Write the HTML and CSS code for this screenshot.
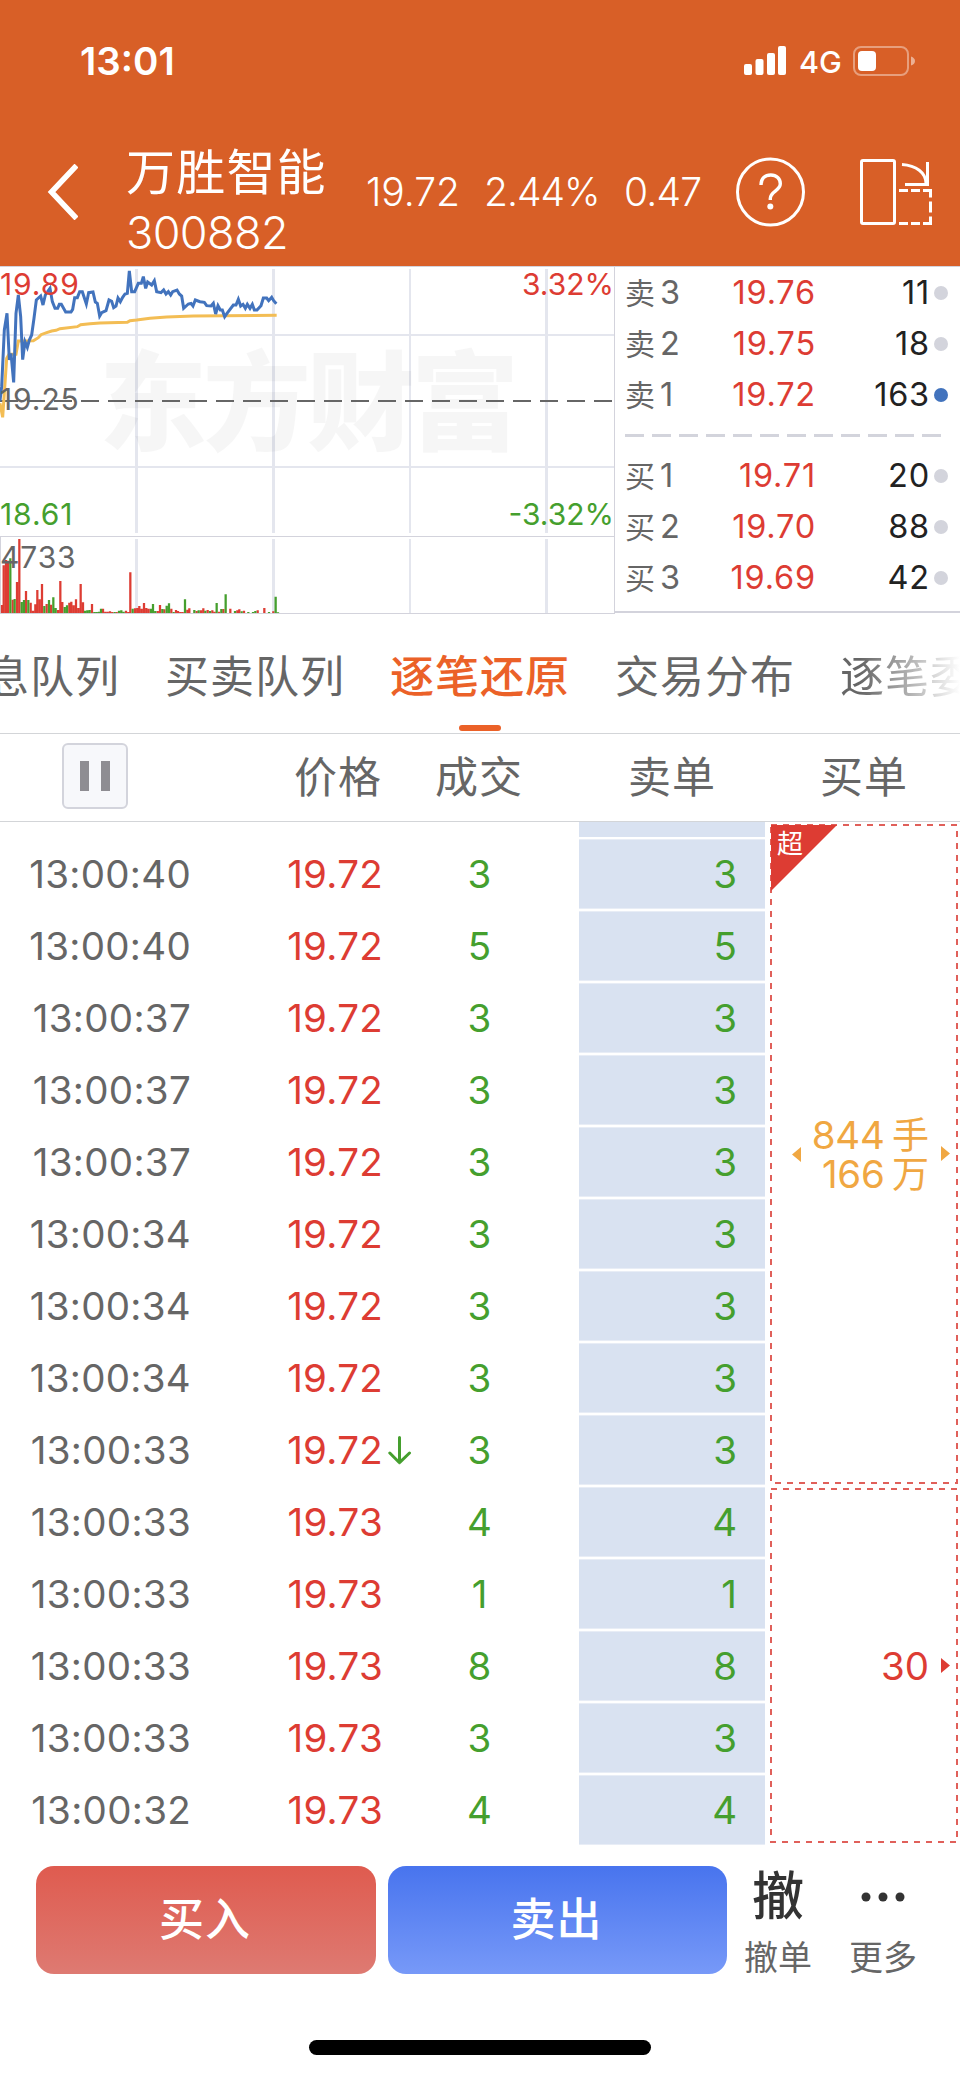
FILE: index.html
```html
<!DOCTYPE html>
<html lang="zh-CN">

<head>
    <meta charset="UTF-8">
    <meta name="viewport" content="width=device-width, initial-scale=1.0">
    <title>万胜智能 300882</title>
    <link rel="stylesheet" href="styles.css">
</head>

<body>
    <!-- Header -->
    <header class="header">
        <div class="status">
            <span class="clock">13:01</span>
            <svg class="signal" width="42" height="29" viewBox="0 0 42 29" fill="#fff">
                <rect x="0" y="18" width="8" height="11" rx="2" />
                <rect x="11.5" y="13" width="8" height="16" rx="2" />
                <rect x="23" y="7" width="8" height="22" rx="2" />
                <rect x="34" y="0" width="8" height="29" rx="2" />
            </svg>
            <span class="network">4G</span>
            <svg class="battery" width="63" height="30" viewBox="0 0 63 30">
                <rect x="1" y="1" width="54" height="28" rx="7" fill="none" stroke="#fff" stroke-opacity=".4" stroke-width="2" />
                <rect x="5" y="5" width="18" height="20" rx="4" fill="#fff" />
                <path d="M58 10.5q4 1.500 4 4.500t-4 4.500z" fill="#fff" fill-opacity=".5" />
            </svg>
        </div>
        <div class="navbar">
            <svg class="back" width="31" height="56" viewBox="0 0 31 56" fill="none" stroke="#fff" stroke-width="5.500">
                <path d="M29.500 1.500L4.500 28l25 26.500" />
            </svg>
            <div class="stock">
                <div class="stock-name">万胜智能</div>
                <div class="stock-code">300882</div>
            </div>
            <div class="quote">
                <span class="quote-price">19.72</span>
                <span class="quote-percent">2.44%</span>
                <span class="quote-change">0.47</span>
            </div>
            <svg class="help" width="70" height="70" viewBox="0 0 70 70" fill="none" stroke="#fff">
                <circle cx="34.500" cy="35" r="33" stroke-width="3" />
                <path d="M25 28c0-6.500 4-10 9.800-10s9.500 3.800 9.500 8.800c0 7.200-10 7.400-10 14.700V43" stroke-width="3.400" />
                <circle cx="34.300" cy="49.500" r="3" fill="#fff" stroke="none" />
            </svg>
            <svg class="rotate" width="72" height="66" viewBox="0 0 72 66" fill="none" stroke="#fff" stroke-width="3">
                <rect x="1.500" y="1.500" width="33" height="63" rx="1.500" />
                <path d="M42 5.500c14 1 24 8 24 19M67.500 3v22.500H45" />
                <path d="M39 31.500h9m3 0h9m3 0h7.500v7m0 4v11m0 4v7H63m-3 0h-9m-3 0h-9" />
            </svg>
        </div>
    </header>

    <!-- Chart and order book -->
    <section class="market">
        <svg class="chart" width="615" height="348" viewBox="0 0 615 348">
            <g fill="#e4e6ee">
                <rect x="135" y="3" width="3" height="264" />
                <rect x="272" y="3" width="3" height="264" />
                <rect x="409" y="3" width="2" height="264" />
                <rect x="545" y="3" width="3" height="264" />
                <rect x="135" y="273" width="3" height="74" />
                <rect x="272" y="273" width="3" height="74" />
                <rect x="409" y="273" width="2" height="74" />
                <rect x="545" y="273" width="3" height="74" />
                <rect x="0" y="68" width="614" height="2" />
                <rect x="0" y="200" width="614" height="2" />
            </g>
            <text class="watermark" x="99" y="176">东方财富</text>
            <g fill="#d3d3dc">
                <rect x="0" y="0" width="615" height="1" />
                <rect x="0" y="270" width="615" height="1" />
                <rect x="0" y="347" width="615" height="1" />
                <rect x="614" y="0" width="1" height="348" />
                <rect x="0" y="270" width="1" height="78" />
            </g>
            <path d="M0 135H612" stroke="#666" stroke-width="2" stroke-dasharray="18 9" />

            <g transform="translate(0 -6) scale(.33333)" fill="none">
                <!-- volume -->
                <path stroke="#dd3c33" stroke-width="6.800" d="M6 1059V1035M11 1059V916M18 1059V900M24 1059V902M38 1059V1019M51 1059V966M58 1059V837M78 1059V993M92 1059V1028M99 1059V1052M106 1059V1033M112 1059V990M119 1059V1018M126 1059V972M140 1059V1032M153 1059V1034M174 1059V1050M181 1059V963M187 1059V1026M208 1059V1028M214 1059V1025M221 1059V1036M228 1059V1018M235 1059V1044M242 1059V972M249 1059V1027M276 1059V1032M309 1059V1046M316 1059V1055M323 1059V1055M330 1059V1054M337 1059V1056M350 1059V1056M378 1059V1052M385 1059V1056M391 1059V937M405 1059V1045M412 1059V1044M418 1059V1038M425 1059V1046M432 1059V1029M439 1059V1044M446 1059V1046M473 1059V1053M480 1059V1035M493 1059V1048M514 1059V1046M528 1059V1050M534 1059V1053M541 1059V1056M548 1059V1056M562 1059V1049M568 1059V1045M590 1059V1053M603 1059V1051M610 1059V1045M623 1059V1050M637 1059V1051M644 1059V1055M657 1059V1055M670 1059V1047M691 1059V1046M712 1059V1051M718 1059V1048M732 1059V1052M773 1059V1051M793 1059V1044M820 1059V1054" />
                <path stroke="#459f2e" stroke-width="6.800" d="M31 1059V895M44 1059V1017M65 1059V1026M72 1059V1020M85 1059V1020M133 1059V1038M147 1059V1020M160 1059V1012M167 1059V1044M194 1059V1041M201 1059V1036M255 1059V1052M262 1059V1051M269 1059V1050M283 1059V1056M290 1059V1056M297 1059V1055M303 1059V1046M344 1059V1056M357 1059V1052M364 1059V1051M371 1059V1055M398 1059V1046M453 1059V1046M459 1059V1032M466 1059V1053M487 1059V1047M500 1059V1037M507 1059V1030M521 1059V1056M555 1059V1018M583 1059V1050M596 1059V1051M616 1059V1052M630 1059V1053M650 1059V1029M664 1059V1047M677 1059V1003M705 1059V1053M725 1059V1054M745 1059V1056M759 1059V1056M766 1059V1053M807 1059V1056M827 1059V1010M834 1059V1057" />
                <!-- average and price -->
                <polyline stroke="#f3bd54" stroke-width="9" points="0,430 8,472 15,370 20,295 27,283 48,283 55,243 100,242 115,233 123,224 140,218 155,213 168,211 180,206 232,200 242,194 270,191 300,189 382,187 390,182 410,180 450,175 500,171 580,168 830,166" />
                <polyline stroke="#4273bd" stroke-width="9" points="0,422 5,380 13,210 21,160 28,300 33,280 41,367 48,160 55,105 62,170 68,299 75,245 82,262 88,240 95,225 102,175 109,120 122,108 129,135 136,105 143,95 150,85 157,125 165,145 173,145 178,133 184,133 197,156 213,156 218,148 224,113 232,113 239,95 247,95 259,132 266,98 279,96 286,126 292,130 299,168 305,158 318,152 327,120 335,124 341,143 348,138 354,114 361,125 368,112 375,102 382,100 388,33 395,95 404,95 415,70 424,70 430,50 437,85 443,66 455,75 463,62 470,95 483,98 491,90 498,102 505,95 512,105 518,95 531,90 538,102 545,108 551,145 565,132 573,130 579,138 586,120 600,125 613,127 620,137 633,138 640,130 647,162 654,137 661,150 667,150 674,170 681,160 700,135 708,135 715,118 722,138 729,133 736,145 742,133 750,145 757,133 763,150 771,150 783,137 790,114 800,114 806,122 815,112 821,122 829,131" />
            </g>

            <g class="axis">
                <text class="up" x="0" y="29">19.89</text>
                <text class="flat" x="0" y="144">19.25</text>
                <text class="down" x="0" y="259">18.61</text>
                <text class="flat" x="0" y="302">4733</text>
                <text class="up percent" x="614" y="29" text-anchor="end">3.32%</text>
                <text class="down percent" x="614" y="259" text-anchor="end">-3.32%</text>
            </g>
        </svg>

        <div class="book">
            <div class="level"><span class="side">卖<b>3</b></span><span class="price">19.76</span><span class="amount">11</span><i class="dot"></i></div>
            <div class="level"><span class="side">卖<b>2</b></span><span class="price">19.75</span><span class="amount">18</span><i class="dot"></i></div>
            <div class="level"><span class="side">卖<b>1</b></span><span class="price">19.72</span><span class="amount">163</span><i class="dot dot-active"></i></div>
            <div class="divider"></div>
            <div class="level"><span class="side">买<b>1</b></span><span class="price">19.71</span><span class="amount">20</span><i class="dot"></i></div>
            <div class="level"><span class="side">买<b>2</b></span><span class="price">19.70</span><span class="amount">88</span><i class="dot"></i></div>
            <div class="level"><span class="side">买<b>3</b></span><span class="price">19.69</span><span class="amount">42</span><i class="dot"></i></div>
        </div>
    </section>

    <!-- Tabs -->
    <nav class="tabs">
        <span class="tab">息队列</span>
        <span class="tab">买卖队列</span>
        <span class="tab active">逐笔还原</span>
        <span class="tab">交易分布</span>
        <span class="tab">逐笔委</span>
    </nav>

    <div class="table-head">
        <div class="pause"><i></i><i></i></div>
        <span class="head-price">价格</span>
        <span class="head-volume">成交</span>
        <span class="head-sell">卖单</span>
        <span class="head-buy">买单</span>
    </div>

    <!-- Trades -->
    <main class="trades">
        <div class="rows">
            <div class="strip"></div>
            <div class="row"><span class="time">13:00:40</span><span class="deal">19.72</span><span class="arrow"></span><span class="volume">3</span><span class="sell">3</span></div>
            <div class="row"><span class="time">13:00:40</span><span class="deal">19.72</span><span class="arrow"></span><span class="volume">5</span><span class="sell">5</span></div>
            <div class="row"><span class="time">13:00:37</span><span class="deal">19.72</span><span class="arrow"></span><span class="volume">3</span><span class="sell">3</span></div>
            <div class="row"><span class="time">13:00:37</span><span class="deal">19.72</span><span class="arrow"></span><span class="volume">3</span><span class="sell">3</span></div>
            <div class="row"><span class="time">13:00:37</span><span class="deal">19.72</span><span class="arrow"></span><span class="volume">3</span><span class="sell">3</span></div>
            <div class="row"><span class="time">13:00:34</span><span class="deal">19.72</span><span class="arrow"></span><span class="volume">3</span><span class="sell">3</span></div>
            <div class="row"><span class="time">13:00:34</span><span class="deal">19.72</span><span class="arrow"></span><span class="volume">3</span><span class="sell">3</span></div>
            <div class="row"><span class="time">13:00:34</span><span class="deal">19.72</span><span class="arrow"></span><span class="volume">3</span><span class="sell">3</span></div>
            <div class="row">
                <span class="time">13:00:33</span><span class="deal">19.72</span>
                <span class="arrow">
                    <svg width="24" height="29" viewBox="0 0 24 29" fill="none" stroke="#459f2e" stroke-width="3" stroke-linecap="round" stroke-linejoin="round">
                        <path d="M11.500 1.500v25M1.800 17l9.700 9.700L21.500 17" />
                    </svg>
                </span>
                <span class="volume">3</span><span class="sell">3</span>
            </div>
            <div class="row"><span class="time">13:00:33</span><span class="deal">19.73</span><span class="arrow"></span><span class="volume">4</span><span class="sell">4</span></div>
            <div class="row"><span class="time">13:00:33</span><span class="deal">19.73</span><span class="arrow"></span><span class="volume">1</span><span class="sell">1</span></div>
            <div class="row"><span class="time">13:00:33</span><span class="deal">19.73</span><span class="arrow"></span><span class="volume">8</span><span class="sell">8</span></div>
            <div class="row"><span class="time">13:00:33</span><span class="deal">19.73</span><span class="arrow"></span><span class="volume">3</span><span class="sell">3</span></div>
            <div class="row"><span class="time">13:00:32</span><span class="deal">19.73</span><span class="arrow"></span><span class="volume">4</span><span class="sell">4</span></div>
        </div>
        <svg class="orders" width="195" height="1024" viewBox="0 0 195 1024">
            <g fill="none" stroke="#e0605a" stroke-width="2" stroke-dasharray="6 6">
                <rect x="6" y="3" width="186" height="658" />
                <rect x="6" y="667" width="186" height="353" />
            </g>
            <path d="M6 3h66L6 69z" fill="#dd3c33" />
            <text class="badge" x="12" y="31">超</text>
            <g class="big-order">
                <text x="119.500" y="327" text-anchor="end">844</text>
                <text x="127" y="327" class="unit">手</text>
                <text x="119.500" y="366" text-anchor="end">166</text>
                <text x="127" y="366" class="unit">万</text>
                <path d="M36 325v15l-9-7.500zM176 324v15l9-7.500z" />
            </g>
            <g class="small-order">
                <text x="164" y="858" text-anchor="end">30</text>
                <path d="M176 836v15l9-7.500z" />
            </g>
        </svg>
    </main>

    <!-- Bottom actions -->
    <footer class="actions">
        <button class="btn btn-buy">买入</button>
        <button class="btn btn-sell">卖出</button>
        <div class="action">
            <div class="action-icon">撤</div>
            <div class="action-label">撤单</div>
        </div>
        <div class="action action-more">
            <div class="action-icon">
                <svg width="44" height="10" viewBox="0 0 44 10" fill="#333">
                    <circle cx="5" cy="5" r="4.500" />
                    <circle cx="22" cy="5" r="4.500" />
                    <circle cx="39" cy="5" r="4.500" />
                </svg>
            </div>
            <div class="action-label">更多</div>
        </div>
    </footer>
    <div class="home-bar"></div>
</body>

</html>
```
FILE: styles.css
```css
* {
    box-sizing: border-box;
}

body {
    margin: 0;
    width: 960px;
    height: 2079px;
    overflow: hidden;
    background-color: #fff;
    color: #666;
    font-family: Inter, "Noto Sans CJK SC", sans-serif;
    line-height: 1.2;
}

svg {
    display: block;
    flex: none;
}

/* header */
.header {
    height: 266px;
    background-color: #d85f27;
    color: #fff;
}

.status {
    display: flex;
    align-items: center;
    height: 122px;
    padding-left: 80px;
}

.clock {
    width: 664px;
    font-size: 38.5px;
    font-weight: 600;
}

.signal {
    margin-top: -1px;
}

.network {
    width: 54px;
    margin-left: 13px;
    padding-top: 2px;
    font-size: 30.5px;
    font-weight: 450;
}

.navbar {
    display: flex;
    align-items: center;
    height: 140px;
    padding-left: 47px;
}

.back {
    margin-top: -1px;
}

.stock {
    width: 240px;
    margin-left: 48px;
    padding-top: 22px;
    line-height: 60px;
}

.stock-name {
    font-size: 49px;
    letter-spacing: 1.2px;
    white-space: nowrap;
}

.stock-code {
    font-size: 45px;
    font-weight: 350;
    letter-spacing: -0.6px;
}

.quote {
    display: flex;
    width: 370px;
    font-size: 39px;
    font-weight: 350;
}

.quote-price {
    width: 118px;
}

.quote-percent {
    width: 140px;
    letter-spacing: -1px;
}

.quote-change {
    letter-spacing: -0.8px;
}

.rotate {
    margin-left: 54px;
}

/* chart */
.market {
    display: flex;
    height: 348px;
}

.watermark {
    fill: #000;
    fill-opacity: .035;
    font-size: 108px;
    font-weight: 900;
    letter-spacing: -4px;
}

.axis {
    font-size: 30px;
    letter-spacing: .9px;
}

.axis .percent {
    letter-spacing: 0;
}

.axis .up {
    fill: #dd3c33;
}

.axis .down {
    fill: #459f2e;
}

.axis .flat {
    fill: #666;
}

.book {
    flex: 1;
    height: 347px;
    padding-left: 10px;
    border-top: 1px solid #d3d3dc;
    border-bottom: 2px solid #d3d3dc;
    font-size: 32.5px;
}

.level {
    display: flex;
    align-items: center;
    height: 51px;
}

.side {
    width: 70px;
    font-size: 30px;
    line-height: 51px;
}

.side b {
    margin-left: 5px;
    font-size: 32.5px;
    font-weight: 400;
}

.price {
    width: 121px;
    text-align: right;
    letter-spacing: .8px;
    color: #dd3c33;
}

.amount {
    width: 114px;
    text-align: right;
    letter-spacing: .8px;
    color: #222;
}

.dot {
    width: 14px;
    height: 14px;
    margin-left: 4px;
    border-radius: 50%;
    background-color: #d3d4dc;
}

.dot-active {
    background-color: #4273bd;
}

.divider {
    width: 316px;
    height: 3px;
    margin: 14px 0 13px;
    background: repeating-linear-gradient(to right, #d3d4dc 0 19px, transparent 19px 27px);
}

/* tabs */
.tabs {
    display: flex;
    gap: 45px;
    height: 120px;
    padding-top: 1px;
    border-bottom: 1px solid #d3d5d8;
    line-height: 124px;
    font-size: 44px;
    letter-spacing: 1px;
    white-space: nowrap;
    overflow: hidden;
}

.tab {
    flex: none;
}

.tab:first-child {
    margin-left: -15px;
}

.tab:last-child {
    background: linear-gradient(to right, #666 0, #666 20px, #fff 120px);
    -webkit-background-clip: text;
    background-clip: text;
    color: transparent;
}

.active {
    display: flex;
    flex-direction: column;
    align-items: center;
    height: 118px;
    color: #eb6128;
    font-weight: 500;
}

.active::after {
    content: "";
    flex: none;
    width: 42px;
    height: 6px;
    margin-top: -14px;
    border-radius: 3px;
    background-color: #eb6128;
}

/* table head */
.table-head {
    display: flex;
    align-items: center;
    height: 88px;
    padding-left: 62px;
    border-bottom: 1px solid #d3d5d8;
    font-size: 43px;
    letter-spacing: 1px;
}

.pause {
    display: flex;
    align-items: center;
    justify-content: center;
    gap: 12px;
    width: 66px;
    height: 66px;
    margin-top: -3px;
    border: 2px solid #d3d4dc;
    border-radius: 6px;
    background-color: #f7f8fb;
}

.pause i {
    width: 9px;
    height: 30px;
    background-color: #8e8d92;
}

.head-price {
    width: 141px;
    margin-left: 166px;
}

.head-volume {
    width: 193px;
}

.head-sell {
    width: 192px;
}

/* trades */
.trades {
    display: flex;
    height: 1024px;
    font-size: 38.5px;
}

.rows {
    width: 765px;
}

.strip {
    width: 186px;
    height: 15px;
    margin: 0 0 1px 579px;
    background-color: #d9e2f1;
}

.row {
    display: flex;
    align-items: center;
    height: 72px;
}

.time {
    width: 191px;
    text-align: right;
    letter-spacing: .3px;
}

.deal {
    width: 192px;
    text-align: right;
    letter-spacing: .3px;
    color: #dd3c33;
}

.arrow {
    width: 66px;
    padding-left: 5px;
}

.volume {
    width: 61px;
    text-align: center;
    color: #459f2e;
}

.sell {
    width: 186px;
    height: 70px;
    margin-left: 69px;
    padding-right: 28px;
    background-color: #d9e2f1;
    box-shadow: inset 0 1px #e8edf6, inset 0 -1px #e8edf6;
    line-height: 70px;
    text-align: right;
    color: #459f2e;
}

.badge {
    fill: #fff;
    font-size: 26px;
}

.big-order {
    fill: #f0a742;
    letter-spacing: -.3px;
}

.unit {
    font-size: 37px;
}

.small-order {
    fill: #dd3c33;
}

/* bottom actions */
.actions {
    display: flex;
    height: 174px;
    padding: 20px 0 0 36px;
}

.btn {
    height: 108px;
    padding: 0 2px 0 0;
    border: none;
    border-radius: 18px;
    color: #fff;
    font-family: inherit;
    font-size: 45px;
    font-weight: 500;
    line-height: 108px;
    letter-spacing: 1px;
}

.btn-buy {
    width: 340px;
    background: linear-gradient(#df5b4f, #de7a72);
}

.btn-sell {
    width: 339px;
    margin-left: 12px;
    background: linear-gradient(#4874ee, #7799f8);
}

.action {
    width: 70px;
    margin-left: 16px;
    text-align: center;
}

.action-more {
    margin-left: 35px;
}

.action-icon {
    display: flex;
    align-items: center;
    justify-content: center;
    height: 62px;
    font-size: 52px;
    font-weight: 500;
    color: #333;
}

.action-label {
    font-size: 34px;
    line-height: 60px;
    white-space: nowrap;
}

.home-bar {
    width: 342px;
    height: 15px;
    margin: 20px auto 0;
    border-radius: 8px;
    background-color: #000;
}
```
